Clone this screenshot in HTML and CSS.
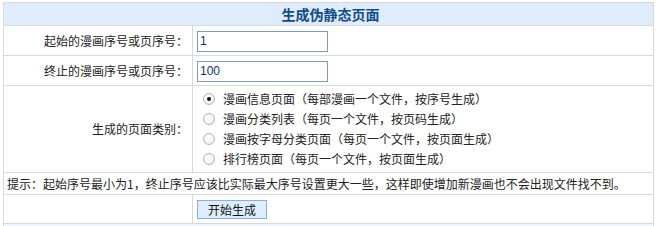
FILE: index.html
```html
<!DOCTYPE html>
<html lang="zh-CN">
<head>
<meta charset="utf-8">
<title>生成伪静态页面</title>
<link rel="stylesheet" href="styles.css">
</head>
<body>
<div class="wrap">
<table class="form">
  <colgroup><col class="col-lbl"><col class="col-val"></colgroup>
  <tr class="head"><td colspan="2">生成伪静态页面</td></tr>
  <tr class="row-input">
    <td class="lbl">起始的漫画序号或页序号：</td>
    <td class="val"><input class="txt" type="text" value="1"></td>
  </tr>
  <tr class="row-input">
    <td class="lbl">终止的漫画序号或页序号：</td>
    <td class="val"><input class="txt" type="text" value="100"></td>
  </tr>
  <tr class="row-radio">
    <td class="lbl">生成的页面类别：</td>
    <td class="val">
      <div class="radios">
        <label class="opt"><span class="radio checked"></span>漫画信息页面（每部漫画一个文件，按序号生成）</label>
        <label class="opt"><span class="radio"></span>漫画分类列表（每页一个文件，按页码生成）</label>
        <label class="opt"><span class="radio"></span>漫画按字母分类页面（每页一个文件，按页面生成）</label>
        <label class="opt"><span class="radio"></span>排行榜页面（每页一个文件，按页面生成）</label>
      </div>
    </td>
  </tr>
  <tr class="row-hint"><td colspan="2" class="hint">提示：起始序号最小为1，终止序号应该比实际最大序号设置更大一些，这样即使增加新漫画也不会出现文件找不到。</td></tr>
  <tr class="row-btn">
    <td class="lbl"></td>
    <td class="val"><button class="btn" type="button">开始生成</button></td>
  </tr>
  <tr class="row-foot"><td colspan="2"></td></tr>
</table>
</div>
</body>
</html>
```
FILE: styles.css
```css
body {
  margin: 0;
  font-family: "Noto Sans CJK SC", "Liberation Sans", sans-serif;
  font-size: 12px;
  color: #222;
  background: #fff;
}
.wrap {
  padding: 2px 0 0 3px;
}
.form {
  width: 651px;
  border-collapse: separate;
  border-spacing: 1px;
  background: #d9d9d9;
  table-layout: fixed;
}
.col-lbl {
  width: 188px;
}
.col-val {
  width: 460px;
}
.form td {
  background: #fff;
  padding: 0;
  line-height: 16px;
}
.head td {
  background: #dfecfc;
  height: 22px;
  text-align: center;
  font-weight: bold;
  font-size: 14px;
  color: #0f4c8a;
  padding-left: 4px;
}
.lbl {
  text-align: right;
  padding-right: 4px !important;
}
.val {
  padding-left: 4px !important;
}
.row-input td {
  height: 29px;
}
.row-radio td {
  height: 86px;
}
.row-hint td {
  height: 21px;
}
.row-btn td {
  height: 28px;
}
.row-foot td {
  height: 10px;
  background: #eef5fd;
}
.hint {
  padding-left: 3px !important;
  white-space: nowrap;
}
.txt {
  display: block;
  box-sizing: border-box;
  width: 131px;
  height: 21px;
  margin: 1px 0 0 0;
  border: 1px solid #7f9db9;
  padding: 0 2px;
  font-family: "Liberation Sans", sans-serif;
  font-size: 12px;
  color: #10306a;
  outline: none;
}
.radios {
  display: flex;
  flex-direction: column;
}
.opt {
  display: flex;
  align-items: center;
  height: 20px;
}
.radio {
  box-sizing: border-box;
  width: 12px;
  height: 12px;
  margin: 0 8px 0 6px;
  border: 1px solid #b4b4b4;
  border-radius: 50%;
  background: radial-gradient(circle at 40% 40%, #fff 0%, #f4f4f4 55%, #e2e2e2 100%);
  display: flex;
  align-items: center;
  justify-content: center;
}
.radio.checked::after {
  content: "";
  width: 4px;
  height: 4px;
  border-radius: 50%;
  background: #111;
}
.btn {
  display: block;
  width: 70px;
  height: 19px;
  margin: 1px 0 0 0;
  padding: 0;
  border: 1px solid #8aaede;
  background: #ddeffe;
  font-family: "Noto Sans CJK SC", sans-serif;
  font-size: 12px;
  line-height: 17px;
  color: #111;
}
```
